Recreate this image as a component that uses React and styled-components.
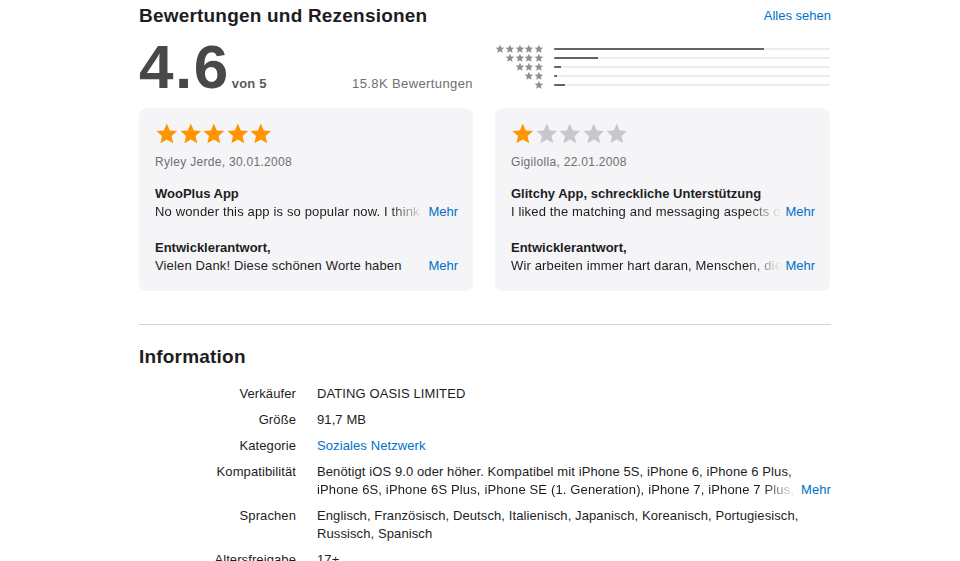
import React from 'react';
import styled, { createGlobalStyle } from 'styled-components';

const GlobalStyle = createGlobalStyle`
  html, body {
    margin: 0;
    padding: 0;
    background: #ffffff;
    overflow: hidden;
  }
  body {
    font-family: 'Liberation Sans', Arial, sans-serif;
    color: #1d1d1f;
    -webkit-font-smoothing: antialiased;
  }
`;

const Page = styled.div`
  width: 692px;
  padding: 4px 0 0 139px;
`;

const SectionHeader = styled.div`
  display: flex;
  justify-content: space-between;
  align-items: center;
  height: 24px;
`;

const SectionTitle = styled.h2`
  margin: 0;
  font-size: 19px;
  line-height: 24px;
  font-weight: 700;
  letter-spacing: 0.2px;
  color: #1d1d1f;
`;

const LinkText = styled.a`
  color: #0070c9;
  font-size: 13px;
  line-height: 18px;
  text-decoration: none;
  cursor: pointer;
  white-space: nowrap;
`;

const TwoCols = styled.div`
  display: grid;
  grid-template-columns: 334px 335px;
  column-gap: 22px;
  margin-top: ${(p) => p.$top || 0}px;
`;

const Summary = styled.div`
  display: flex;
  align-items: baseline;
`;

const BigScore = styled.span`
  font-size: 62px;
  line-height: 52px;
  font-weight: 700;
  letter-spacing: 1.5px;
  color: #48484a;
`;

const OutOf = styled.span`
  font-size: 13px;
  font-weight: 700;
  color: #5a5a5e;
  margin-left: 2px;
  letter-spacing: 0.2px;
`;

const Count = styled.span`
  margin-left: auto;
  font-size: 13px;
  color: #6e6e73;
  letter-spacing: 0.4px;
`;

const Histogram = styled.div`
  display: flex;
  flex-direction: column;
  padding-top: 3px;
`;

const HistRow = styled.div`
  display: flex;
  align-items: center;
  height: 9px;
`;

const HistStars = styled.div`
  width: 49px;
  display: flex;
  justify-content: flex-end;
`;

const Track = styled.div`
  flex: 1;
  margin-left: 10px;
  height: 2px;
  background: #ebebf0;
  border-radius: 1px;
  overflow: hidden;
`;

const Fill = styled.div`
  height: 100%;
  background: #636366;
`;

const Card = styled.div`
  background: #f5f5f7;
  border-radius: 8px;
  padding: 14px 15px 17px 16px;
  height: 183px;
  box-sizing: border-box;
  display: flex;
  flex-direction: column;
  min-width: 0;
`;

const StarRow = styled.div`
  display: flex;
  gap: ${(p) => p.$gap}px;
`;

const Reviewer = styled.div`
  margin-top: 7px;
  font-size: 12px;
  line-height: 18px;
  color: #6e6e73;
  letter-spacing: 0.3px;
`;

const Heading = styled.div`
  margin-top: ${(p) => p.$top || 0}px;
  font-size: 13px;
  line-height: 18px;
  font-weight: 700;
  color: #1d1d1f;
`;

const MoreLine = styled.div`
  display: flex;
  align-items: baseline;
  font-size: 13px;
  line-height: 18px;
  min-width: 0;
`;

const Clip = styled.span`
  flex: 1;
  min-width: 0;
  white-space: nowrap;
  overflow: hidden;
  color: #1d1d1f;
  letter-spacing: 0.15px;
  ${(p) =>
    p.$fade &&
    `-webkit-mask-image: linear-gradient(to right, #000 calc(100% - 34px), transparent 100%);
     mask-image: linear-gradient(to right, #000 calc(100% - 34px), transparent 100%);`}
`;

const More = styled(LinkText)`
  margin-left: 4px;
`;

const Divider = styled.hr`
  margin: 33px 0 20px;
  border: 0;
  border-top: 1px solid #d2d2d7;
`;

const InfoList = styled.dl`
  display: grid;
  grid-template-columns: 157px minmax(0, 1fr);
  column-gap: 21px;
  row-gap: 8px;
  margin: 16px 0 0;
  font-size: 13px;
  line-height: 18px;
`;

const Term = styled.dt`
  text-align: right;
  color: #1d1d1f;
  letter-spacing: 0.1px;
`;

const Value = styled.dd`
  margin: 0;
  min-width: 0;
  color: #1d1d1f;
  letter-spacing: 0.1px;
`;

const STAR = 'M12 1.6l3.05 6.95 7.45.7-5.65 4.95 1.68 7.35L12 17.75l-6.53 3.8 1.68-7.35L1.5 9.25l7.45-.7z';

const Star = ({ size, color }) => (
  <svg width={size} height={size} viewBox="0 0 24 24">
    <path d={STAR} fill={color} />
  </svg>
);

const Stars = ({ value, size, gap, on = '#ff9500', off = '#c7c7cc' }) => (
  <StarRow $gap={gap}>
    {[0, 1, 2, 3, 4].map((i) => (
      <Star key={i} size={size} color={i < value ? on : off} />
    ))}
  </StarRow>
);

const bars = [
  { stars: 5, pct: 76 },
  { stars: 4, pct: 16 },
  { stars: 3, pct: 2.6 },
  { stars: 2, pct: 1 },
  { stars: 1, pct: 4 },
];

const reviews = [
  {
    rating: 5,
    author: 'Ryley Jerde, 30.01.2008',
    title: 'WooPlus App',
    body: 'No wonder this app is so popular now. I think it is the best dating app I have ever used.',
    bodyFade: true,
    reply: 'Vielen Dank! Diese schönen Worte haben',
    replyFade: false,
  },
  {
    rating: 1,
    author: 'Gigilolla, 22.01.2008',
    title: 'Glitchy App, schreckliche Unterstützung',
    body: 'I liked the matching and messaging aspects of the app but it keeps crashing.',
    bodyFade: true,
    reply: 'Wir arbeiten immer hart daran, Menschen, die sich kennenlernen wollen, zu helfen.',
    replyFade: true,
  },
];

const ReviewCard = ({ r }) => (
  <Card>
    <Stars value={r.rating} size={23.6} gap={0} />
    <Reviewer>{r.author}</Reviewer>
    <Heading $top={14}>{r.title}</Heading>
    <MoreLine>
      <Clip $fade={r.bodyFade}>{r.body}</Clip>
      <More>Mehr</More>
    </MoreLine>
    <Heading $top={18}>Entwicklerantwort,</Heading>
    <MoreLine>
      <Clip $fade={r.replyFade}>{r.reply}</Clip>
      <More>Mehr</More>
    </MoreLine>
  </Card>
);

export default function App() {
  return (
    <>
      <GlobalStyle />
      <Page>
        <SectionHeader>
          <SectionTitle>Bewertungen und Rezensionen</SectionTitle>
          <LinkText>Alles sehen</LinkText>
        </SectionHeader>

        <TwoCols $top={13}>
          <Summary>
            <BigScore>4.6</BigScore>
            <OutOf>von 5</OutOf>
            <Count>15.8K Bewertungen</Count>
          </Summary>
          <Histogram>
            {bars.map((b) => (
              <HistRow key={b.stars}>
                <HistStars>
                  {Array.from({ length: b.stars }).map((_, i) => (
                    <Star key={i} size={9.8} color="#8e8e93" />
                  ))}
                </HistStars>
                <Track>
                  <Fill style={{ width: `${b.pct}%` }} />
                </Track>
              </HistRow>
            ))}
          </Histogram>
        </TwoCols>

        <TwoCols $top={15}>
          {reviews.map((r) => (
            <ReviewCard key={r.author} r={r} />
          ))}
        </TwoCols>

        <Divider />

        <SectionHeader>
          <SectionTitle>Information</SectionTitle>
        </SectionHeader>

        <InfoList>
          <Term>Verkäufer</Term>
          <Value>DATING OASIS LIMITED</Value>
          <Term>Größe</Term>
          <Value>91,7 MB</Value>
          <Term>Kategorie</Term>
          <Value>
            <LinkText>Soziales Netzwerk</LinkText>
          </Value>
          <Term>Kompatibilität</Term>
          <Value>
            <div>Benötigt iOS 9.0 oder höher. Kompatibel mit iPhone 5S, iPhone 6, iPhone 6 Plus,</div>
            <MoreLine>
              <Clip $fade>
                iPhone 6S, iPhone 6S Plus, iPhone SE (1. Generation), iPhone 7, iPhone 7 Plus, iPhone 8, iPhone 8 Plus
              </Clip>
              <More>Mehr</More>
            </MoreLine>
          </Value>
          <Term>Sprachen</Term>
          <Value>
            Englisch, Französisch, Deutsch, Italienisch, Japanisch, Koreanisch, Portugiesisch,
            <br />
            Russisch, Spanisch
          </Value>
          <Term>Altersfreigabe</Term>
          <Value>17+</Value>
        </InfoList>
      </Page>
    </>
  );
}
